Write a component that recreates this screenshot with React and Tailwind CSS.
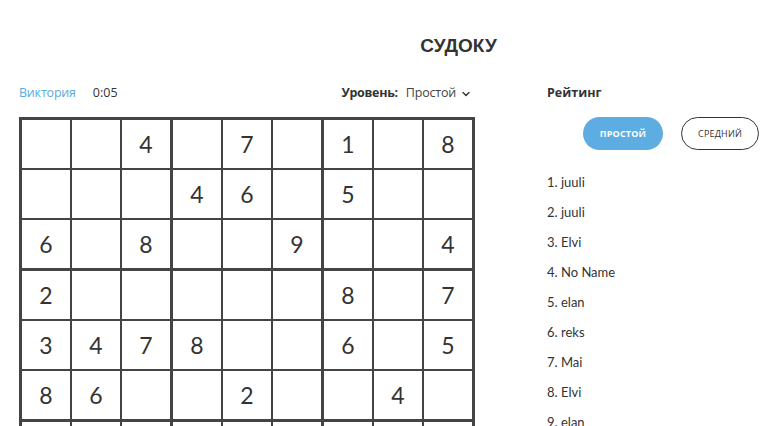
import React from "react";

const puzzle = [
  [0, 0, 4, 0, 7, 0, 1, 0, 8],
  [0, 0, 0, 4, 6, 0, 5, 0, 0],
  [6, 0, 8, 0, 0, 9, 0, 0, 4],
  [2, 0, 0, 0, 0, 0, 8, 0, 7],
  [3, 4, 7, 8, 0, 0, 6, 0, 5],
  [8, 6, 0, 0, 2, 0, 0, 4, 0],
  [0, 0, 0, 0, 0, 0, 0, 0, 0],
  [0, 0, 0, 0, 0, 0, 0, 0, 0],
  [0, 0, 0, 0, 0, 0, 0, 0, 0],
];

const ranking = ["juuli", "juuli", "Elvi", "No Name", "elan", "reks", "Mai", "Elvi", "elan", "Mai"];

function Box({ br, bc }) {
  const cells = [];
  for (let r = 0; r < 3; r++) {
    for (let c = 0; c < 3; c++) {
      const v = puzzle[br * 3 + r][bc * 3 + c];
      cells.push(
        <div
          key={r * 3 + c}
          className="bg-white w-[48px] h-[48px] flex items-center justify-center text-[23px] font-normal text-[#333] leading-none"
          style={{ fontFamily: "Lato, 'Noto Sans', sans-serif" }}
        >
          {v ? v : ""}
        </div>
      );
    }
  }
  return <div className="grid grid-cols-3 gap-[2px] bg-[#444]">{cells}</div>;
}

export default function App() {
  const boxes = [];
  for (let br = 0; br < 3; br++) for (let bc = 0; bc < 3; bc++) boxes.push(<Box key={br * 3 + bc} br={br} bc={bc} />);

  return (
    <div className="w-[768px] h-[426px] overflow-hidden bg-white" style={{ fontFamily: "'Open Sans', 'Liberation Sans', sans-serif" }}>
      <div className="pl-[149px] pt-[34px] text-center">
        <h1 className="text-[19px] font-bold text-[#333] leading-[24px]" style={{ fontFamily: "'Liberation Sans', sans-serif" }}>СУДОКУ</h1>
      </div>
      <div className="flex pt-[23px]">
        <div className="ml-[19px] w-[456px]">
          <div className="flex items-center justify-between h-[24px] text-[12.5px] leading-none">
            <div className="flex items-center">
              <span className="text-[#5aaadf] tracking-[-0.2px]">Виктория</span>
              <span className="ml-[17px] text-[#333]">0:05</span>
            </div>
            <div className="flex items-center mr-[4px] text-[#333]">
              <span className="font-bold tracking-[-0.3px]">Уровень:</span>
              <span className="ml-[8px] text-[#444] tracking-[-0.2px]">Простой</span>
              <svg width="10" height="10" viewBox="0 0 10 10" className="ml-[5px] mt-[1px]">
                <path d="M2 3.5 L5 6.5 L8 3.5" fill="none" stroke="#333" strokeWidth="1.4" strokeLinecap="round" strokeLinejoin="round" />
              </svg>
            </div>
          </div>
          <div className="mt-[12px] border-[3px] border-[#444] bg-[#444] grid grid-cols-3 gap-[3px] w-[456px]">
            {boxes}
          </div>
        </div>
        <div className="ml-[72px] flex flex-col">
          <div className="h-[24px] flex items-center text-[12.5px] font-bold text-[#333] leading-none">Рейтинг</div>
          <div className="mt-[12px] pl-[36px] flex gap-[18px]">
            <button className="w-[80px] h-[33px] rounded-full bg-[#5dade2] text-white text-[9px] font-bold tracking-[0.2px]">ПРОСТОЙ</button>
            <button className="w-[78px] h-[33px] rounded-full border border-[#333] bg-white text-[#333] text-[9px] tracking-[0.2px]">СРЕДНИЙ</button>
          </div>
          <ul className="mt-[23px] flex flex-col gap-[12px] text-[13px] text-[#333] leading-[18px]" style={{ fontFamily: "Lato, 'Open Sans', sans-serif" }}>
            {ranking.map((n, i) => (
              <li key={i}>{i + 1}. {n}</li>
            ))}
          </ul>
        </div>
      </div>
    </div>
  );
}
